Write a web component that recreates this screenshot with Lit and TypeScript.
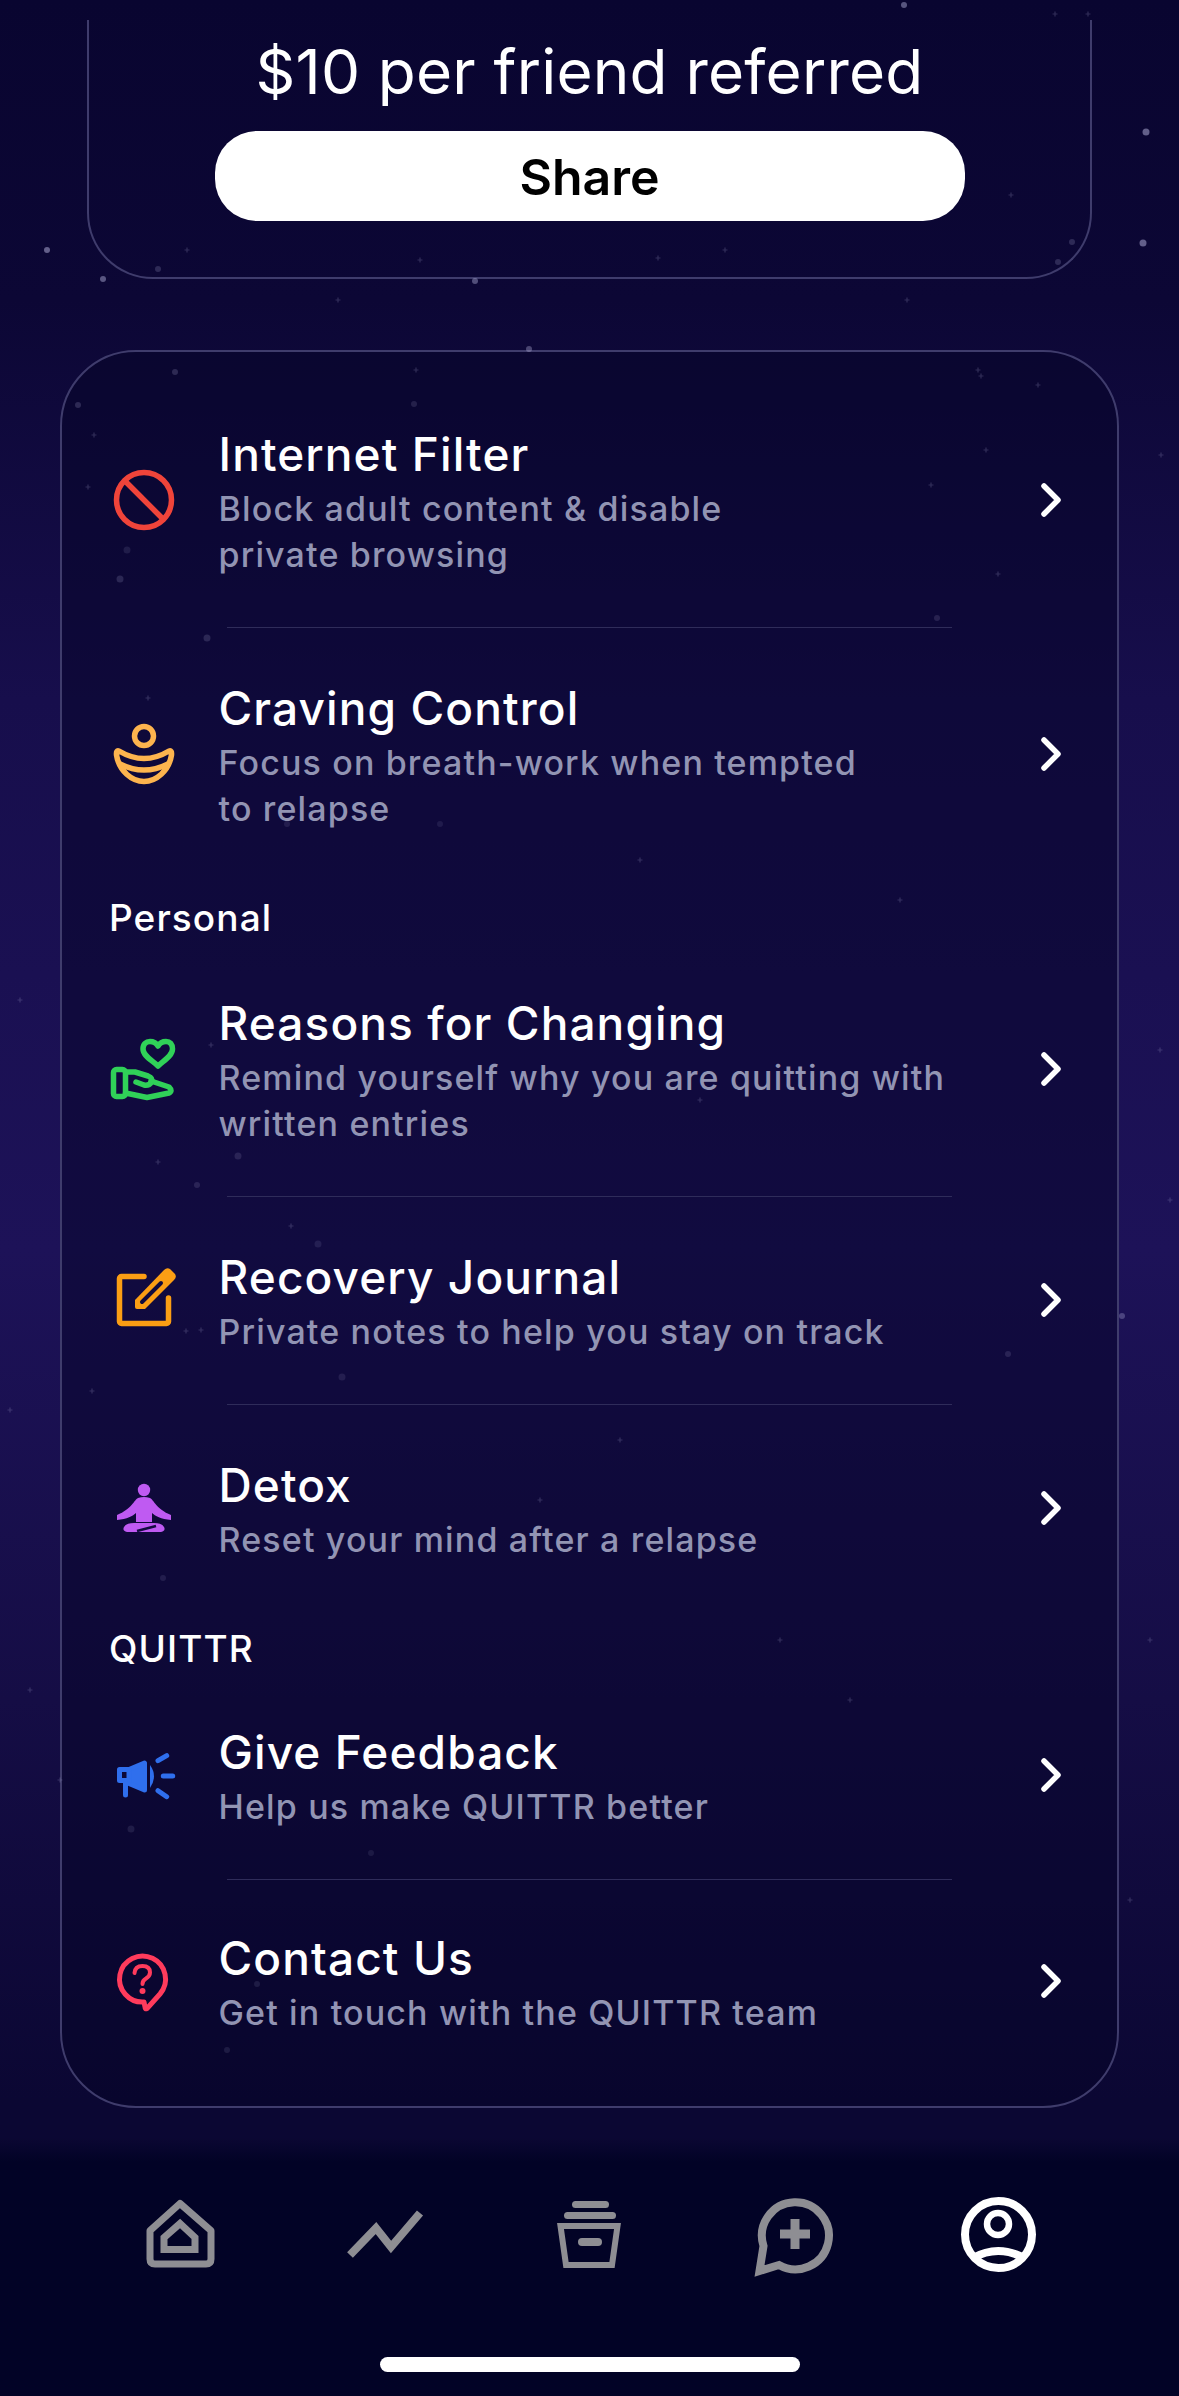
import { LitElement, css, html, svg } from "lit";
import { customElement } from "lit/decorators.js";

const ICONS = {
  ban: svg`<circle cx="30" cy="30" r="27.5" fill="none" stroke="#f0443a" stroke-width="5.5"/><path d="M11 11L49 49" stroke="#f0443a" stroke-width="5.5"/>`,
  craving: svg`<g fill="none" stroke="#fdb44e" stroke-width="5.5" stroke-linecap="round" stroke-linejoin="round"><circle cx="30" cy="12" r="9.5"/><path d="M5 27Q30 42 55 27Q58 26 57.5 31C55 47 42 57.5 30 57.5C18 57.5 5 47 2.5 31Q2 26 5 27Z"/><path d="M6 40Q30 52 54 40"/></g>`,
  hand: svg`<g transform="translate(-3 0)" fill="none" stroke="#30d158" stroke-width="5.5" stroke-linecap="round" stroke-linejoin="round"><path d="M47 27C42 22 32 17 32 10C32 5 35 2.5 39 2.5C42.5 2.5 45.5 4.5 47 7C48.5 4.5 51.5 2.5 55 2.5C59 2.5 61.5 5 61.5 10C61.5 17 52 22 47 27Z"/><rect x="2.5" y="30.5" width="12" height="27" rx="3"/><path d="M14.5 33H24L37 37Q42 39 40.5 43Q38 47 33 46L25 43"/><path d="M40 42L58 48Q62 52 58 54L36 58.5L14.5 54"/></g>`,
  journal: svg`<g transform="translate(1 -3)"><path d="M29 9.5H6.5a2 2 0 0 0-2 2V54.5a2 2 0 0 0 2 2H51.5a2 2 0 0 0 2-2V31" fill="none" stroke="#fb9e14" stroke-width="5.5" stroke-linecap="round"/><path d="M20 33L49 3Q52 0 55 2L60 7Q62 10 59 13L30 42H22Q20 42 20 40Z" fill="#fb9e14"/><path d="M27 35L46 16" stroke="#110b3e" stroke-width="4" stroke-linecap="round"/></g>`,
  detox: svg`<g transform="translate(0 3)"><g fill="#bf5af2"><circle cx="30" cy="9" r="6.2"/><path d="M24 17Q30 15 36 17C40 19 42 28 57 34V39C47 38 41 35 38 32V41H22V32C19 35 13 38 3 39V34C18 28 20 19 24 17Z"/><path d="M13 51Q8 50 10 46Q12 42 20 42H40Q48 42 50 46Q52 50 47 51Z"/></g><path d="M23 50L42 45" stroke="#130c40" stroke-width="2.5"/></g>`,
  megaphone: svg`<g transform="translate(0 1)"><g stroke="#2f6fed" stroke-width="5" stroke-linecap="round" stroke-linejoin="round"><path d="M44 14.7L52.7 9.7M49.3 30H58.7M44 44.7L52.7 50.7" fill="none"/><path d="M30.5 17V44L15 37.5V23.5Z" fill="#2f6fed"/><path d="M15 23.5H5.5V34.5H15" fill="none"/><path d="M11.5 36V49" fill="none"/></g><path d="M36 19Q44 30 36 42Z" fill="#2f6fed"/></g>`,
  question: svg`<path d="M30 51A23 23 0 1 1 46 43L33 57.5Q31 58.5 31 56Z" fill="none" stroke="#ff3b5c" stroke-width="5" stroke-linejoin="round"/><path d="M20.5 22Q21 15 28.5 15Q36 15 36 21.5Q36 25 32 27.5Q28.5 29.5 28.5 33" fill="none" stroke="#ff3b5c" stroke-width="4" stroke-linecap="round"/><circle cx="28.5" cy="40" r="3" fill="#ff3b5c"/>`,
};

const TABS = [
  svg`<g fill="none" stroke="currentColor" stroke-width="7" stroke-linejoin="round"><path d="M45 15.5L15 42.7V71Q15 76 20 76H71Q76 76 76 71V42.7Z"/><path d="M29 61.5V49.5L45 35.5L60 49.5V61.5Z" stroke-linejoin="miter"/></g>`,
  svg`<path d="M10 67L36 40L51 59L80 25" fill="none" stroke="currentColor" stroke-width="8"/>`,
  svg`<g fill="currentColor"><rect x="28" y="13" width="37" height="7" rx="3.5"/><rect x="20" y="24" width="52" height="7" rx="3.5"/><rect x="34" y="50" width="24" height="8" rx="4"/></g><path d="M16.5 38H73.5L68 77H22Z" fill="none" stroke="currentColor" stroke-width="6"/>`,
  svg`<path d="M30 77A33.5 33.5 0 1 0 14.5 58L10.5 83Z" fill="none" stroke="currentColor" stroke-width="8"/><path d="M31 46H61M46 31V61" stroke="currentColor" stroke-width="9"/>`,
  svg`<g fill="none" stroke="currentColor"><circle cx="45.5" cy="46.5" r="33.5" stroke-width="8"/><circle cx="45" cy="36" r="11" stroke-width="6.5"/><path d="M20 70Q45 56 71 70" stroke-width="8"/></g>`,
];

type Row = { icon: keyof typeof ICONS; title: string; sub: string[] };
type Section = { label?: string; compact?: boolean; rows: Row[] };

const SECTIONS: Section[] = [
  {
    rows: [
      { icon: "ban", title: "Internet Filter", sub: ["Block adult content & disable", "private browsing"] },
      { icon: "craving", title: "Craving Control", sub: ["Focus on breath-work when tempted", "to relapse"] },
    ],
  },
  {
    label: "Personal",
    rows: [
      { icon: "hand", title: "Reasons for Changing", sub: ["Remind yourself why you are quitting with", "written entries"] },
      { icon: "journal", title: "Recovery Journal", sub: ["Private notes to help you stay on track"] },
      { icon: "detox", title: "Detox", sub: ["Reset your mind after a relapse"] },
    ],
  },
  {
    label: "QUITTR",
    compact: true,
    rows: [
      { icon: "megaphone", title: "Give Feedback", sub: ["Help us make QUITTR better"] },
      { icon: "question", title: "Contact Us", sub: ["Get in touch with the QUITTR team"] },
    ],
  },
];

// x, y, radius, alpha
const DOTS = [
  [904, 5, 3, 0.45], [47, 250, 3, 0.5], [103, 279, 3, 0.45], [1146, 132, 3.5, 0.5], [1143, 243, 3.5, 0.5],
  [475, 281, 3, 0.4], [529, 349, 3, 0.35], [1072, 242, 3, 0.2], [1058, 262, 3, 0.2], [158, 269, 3, 0.2],
  [175, 372, 3, 0.2], [78, 405, 3, 0.2], [414, 404, 3, 0.15], [127, 550, 3.5, 0.12], [120, 579, 3.5, 0.18],
  [207, 638, 3.5, 0.18], [238, 1156, 3.5, 0.15], [197, 1185, 3, 0.15], [318, 1244, 3.5, 0.12], [342, 1377, 3.5, 0.12],
  [163, 1578, 3, 0.12], [131, 1829, 3.5, 0.12], [371, 1853, 3, 0.1], [257, 1984, 3, 0.12], [227, 2050, 3, 0.12],
  [937, 618, 3, 0.15], [1122, 1316, 3, 0.3], [1008, 1354, 3, 0.15], [287, 824, 3, 0.12], [440, 824, 3, 0.1],
];

const SPARKS = [
  [94, 435], [88, 487], [148, 698], [981, 376], [1038, 385], [986, 450], [931, 485], [1161, 455], [998, 574],
  [187, 250], [725, 250], [420, 260], [658, 258], [338, 300], [907, 300], [1055, 14], [1088, 14], [1011, 195],
  [416, 370], [978, 370], [211, 1045], [158, 1162], [291, 1226], [186, 1331], [92, 1391], [201, 1330],
  [20, 1000], [1160, 1050], [10, 1410], [1170, 1200], [30, 1690], [1150, 1640], [60, 1780], [1130, 1900],
  [620, 1440], [780, 1640], [540, 1500], [850, 1700], [700, 1100], [900, 900], [640, 860], [470, 760],
];

@customElement("app-root")
export class AppRoot extends LitElement {
  static styles = css`
    :host {
      display: block;
      position: relative;
      width: 1179px;
      height: 2396px;
      overflow: hidden;
      color: #fff;
      font-family: "Inter", "Liberation Sans", sans-serif;
      background: linear-gradient(
        180deg,
        #090530 0,
        #0c0735 300px,
        #170e4c 700px,
        #1d1258 1250px,
        #150d45 1700px,
        #0b0733 2100px
      );
    }

    .stars {
      position: absolute;
      inset: 0;
      pointer-events: none;
    }

    .content {
      position: relative;
      display: flex;
      flex-direction: column;
      padding-top: 20px;
    }

    .promo {
      box-sizing: border-box;
      height: 259px;
      margin: 0 87px;
      padding-top: 22px;
      border: 2.5px solid #3f3c6c;
      border-top: 0;
      border-radius: 0 0 66px 66px;
      display: flex;
      flex-direction: column;
      align-items: center;
    }

    .promo-title {
      font-size: 62px;
      line-height: 60px;
      letter-spacing: 0.2px;
    }

    .share {
      width: 750px;
      height: 90px;
      margin-top: 29px;
      border-radius: 42px;
      background: #fff;
      color: #000;
      font-size: 50px;
      font-weight: 600;
      line-height: 92px;
      text-align: center;
    }

    .list {
      box-sizing: border-box;
      height: 1758px;
      margin: 71px 60px 0;
      padding: 20.5px 0;
      border: 2.5px solid #3f3c6c;
      border-radius: 76px;
      background: rgba(6, 4, 40, 0.5);
    }

    .label {
      height: 61px;
      padding: 10px 0 0 47px;
      box-sizing: border-box;
      font-size: 37px;
      line-height: 54px;
      font-weight: 500;
      letter-spacing: 1.1px;
    }

    .label.compact {
      height: 59px;
    }

    .row {
      display: flex;
      align-items: center;
      padding: 49px 0;
    }

    .row:last-child {
      padding-top: 47px;
    }

    .row-icon {
      box-sizing: border-box;
      width: 156.5px;
      padding-left: 51.5px;
      display: flex;
    }

    .row-icon svg {
      width: 64px;
      height: 60px;
      overflow: visible;
    }

    .text {
      flex: 1;
      min-width: 0;
    }

    .title {
      font-size: 46px;
      line-height: 64px;
      font-weight: 500;
      letter-spacing: 1.1px;
    }

    .sub {
      font-size: 34px;
      line-height: 46px;
      font-weight: 500;
      letter-spacing: 1.15px;
      color: #9294b3;
    }

    .chevron {
      width: 24px;
      height: 36px;
      margin-right: 54px;
    }

    .divider {
      height: 1px;
      margin: 0 165px -1px;
      background: #2f2c5a;
    }

    .tabs {
      position: absolute;
      left: 0;
      right: 0;
      bottom: 0;
      height: 258px;
      background: linear-gradient(180deg, rgba(2, 3, 38, 0) 0, #020326 24px);
      display: flex;
      flex-direction: column;
    }

    .tab-row {
      display: grid;
      grid-template-columns: repeat(5, 204.5px);
      padding: 50px 0 0 78px;
      color: #8e8e93;
    }

    .tab {
      display: flex;
      justify-content: center;
    }

    .tab svg {
      width: 90px;
      height: 90px;
    }

    .tab.active {
      color: #fff;
    }

    .home-bar {
      width: 420px;
      height: 15px;
      margin: 79px auto 0;
      border-radius: 8px;
      background: #fff;
    }
  `;

  private renderRow(row: Row, last: boolean) {
    return html`
      <div class="row">
        <div class="row-icon"><svg viewBox="0 0 64 60">${ICONS[row.icon]}</svg></div>
        <div class="text">
          <div class="title">${row.title}</div>
          ${row.sub.map((line) => html`<div class="sub">${line}</div>`)}
        </div>
        <svg class="chevron" viewBox="0 0 24 36">
          <path d="M5 4L19 18L5 32" fill="none" stroke="#fff" stroke-width="5.5" stroke-linecap="round" stroke-linejoin="round" />
        </svg>
      </div>
      ${last ? "" : html`<div class="divider"></div>`}
    `;
  }

  render() {
    return html`
      <div class="content">
        <div class="promo">
          <div class="promo-title">$10 per friend referred</div>
          <div class="share">Share</div>
        </div>
        <div class="list">
          ${SECTIONS.map(
            (section) => html`
              ${section.label ? html`<div class="label ${section.compact ? "compact" : ""}">${section.label}</div>` : ""}
              ${section.rows.map((row, i) => this.renderRow(row, i === section.rows.length - 1))}
            `
          )}
        </div>
      </div>
      <svg class="stars" width="1179" height="2396" viewBox="0 0 1179 2396">
        ${DOTS.map(([x, y, r, a]) => svg`<circle cx=${x} cy=${y} r=${r} fill="#b9b8e0" opacity=${a} />`)}
        ${SPARKS.map(
          ([x, y]) => svg`<path d="M${x - 2.5} ${y}H${x + 2.5}M${x} ${y - 2.5}V${y + 2.5}" stroke="#b9b8e0" stroke-width="1.2" opacity="0.22" />`
        )}
      </svg>
      <div class="tabs">
        <div class="tab-row">
          ${TABS.map(
            (icon, i) => html`<div class="tab ${i === 4 ? "active" : ""}"><svg viewBox="0 0 90 90">${icon}</svg></div>`
          )}
        </div>
        <div class="home-bar"></div>
      </div>
    `;
  }
}
